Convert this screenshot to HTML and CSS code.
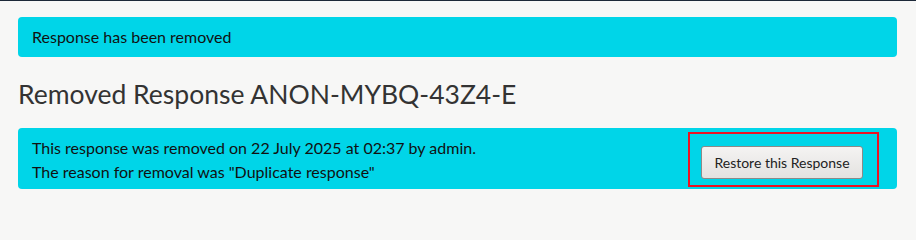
FILE: index.html
```html
<!DOCTYPE html>
<html lang="en">
<head>
<meta charset="utf-8">
<title>Removed Response</title>
<link rel="stylesheet" href="styles.css">
</head>
<body>
<div class="page">
  <div class="alert alert-top">Response has been removed</div>
  <h1 class="title">Removed Response ANON-MYBQ-43Z4-E</h1>
  <div class="alert alert-info">
    <div class="info-text">
      <div>This response was removed on 22 July 2025 at 02:37 by admin.</div>
      <div>The reason for removal was "Duplicate response"</div>
    </div>
    <div class="highlight">
      <button class="btn" type="button">Restore this Response</button>
    </div>
  </div>
</div>
</body>
</html>
```

FILE: styles.css
```css
html, body {
  margin: 0;
  padding: 0;
  background: #f7f7f6;
}

html {
  height: 213px;
  overflow: hidden;
}

body {
  font-family: Lato, "Noto Sans", sans-serif;
  color: #111;
  border-top: 1px solid #1c2838;
  box-sizing: border-box;
  height: 213px;
  overflow: hidden;
}

.page {
  padding: 16px 19px 0 18px;
}

.alert {
  background: #00d5e8;
  border-radius: 4px;
  font-size: 16px;
  color: #111;
}

.alert-top {
  height: 40px;
  line-height: 40px;
  padding: 0 14px;
  box-sizing: border-box;
}

.title {
  margin: 19px 0 0;
  font-size: 26.5px;
  font-weight: 400;
  color: #333;
  line-height: 36px;
  height: 52px;
}

.alert-info {
  display: flex;
  justify-content: space-between;
  align-items: center;
  padding: 4px 18px 2px 14px;
}

.info-text {
  line-height: 24px;
}

.highlight {
  border: 2px solid #ee1122;
  padding: 12px 14px 6px 11px;
}

.btn {
  display: block;
  width: 162px;
  height: 33px;
  font-family: Lato, "Noto Sans", sans-serif;
  font-size: 14px;
  color: #222;
  border: 1px solid #8c8a88;
  border-radius: 3px;
  background: linear-gradient(#f4f3f2, #e4e2e0);
  padding: 0;
}
```
